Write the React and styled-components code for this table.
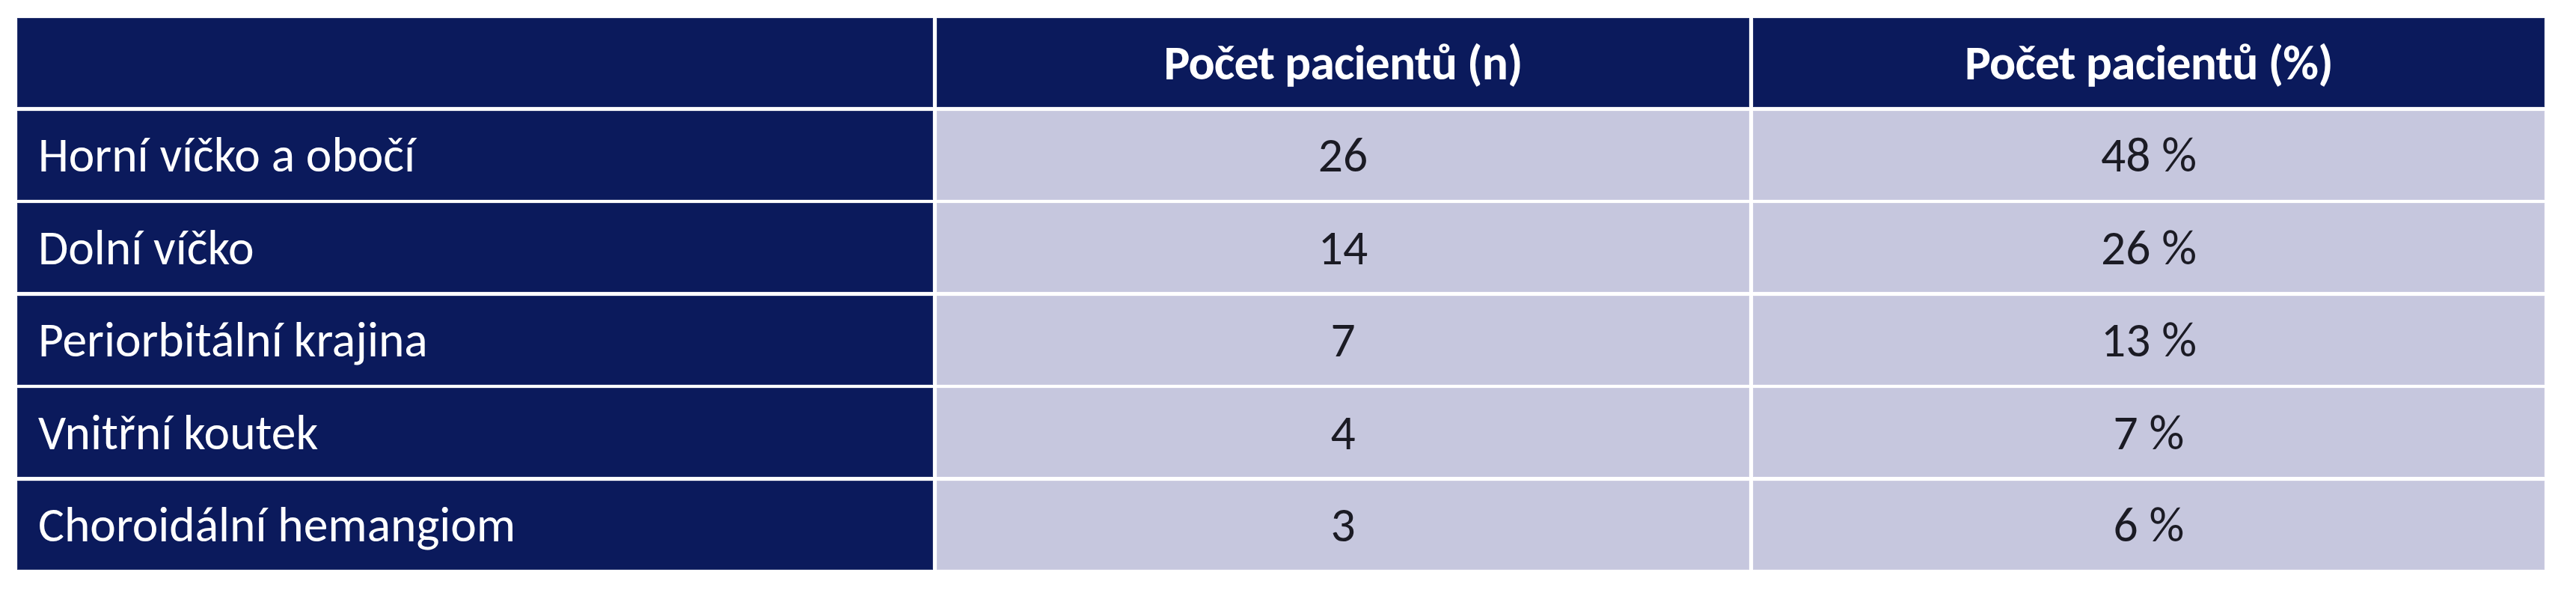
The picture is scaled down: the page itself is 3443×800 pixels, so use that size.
import React from 'react';
import styled, { createGlobalStyle } from 'styled-components';

const GlobalStyle = createGlobalStyle`
  html, body {
    margin: 0;
    padding: 0;
    background: #ffffff;
  }
  body {
    font-family: "Carlito", "Liberation Sans", Arial, sans-serif;
  }
`;

const Page = styled.div`
  padding: 24px 0 0 23px;
`;

const Grid = styled.div`
  display: grid;
  grid-template-columns: 1224px 1086px 1058px;
  grid-auto-rows: 119px;
  column-gap: 5px;
  row-gap: 4.6px;
  width: max-content;
`;

const Cell = styled.div`
  display: flex;
  align-items: center;
  justify-content: ${({ $align }) => ($align === 'left' ? 'flex-start' : 'center')};
  padding: 0 ${({ $align }) => ($align === 'left' ? '28px' : '0')};
  background: ${({ $dark }) => ($dark ? '#0b1a5c' : '#c6c7de')};
  color: ${({ $dark }) => ($dark ? '#ffffff' : '#1b1b24')};
  font-size: 65.5px;
  font-weight: ${({ $bold }) => ($bold ? 700 : 400)};
  letter-spacing: ${({ $bold }) => ($bold ? '-0.8px' : '0')};
  white-space: nowrap;
  box-shadow: inset 0 0 0 1px rgba(255, 255, 255, 0.12);
`;

const rows = [
  ['Horní víčko a obočí', '26', '48 %'],
  ['Dolní víčko', '14', '26 %'],
  ['Periorbitální krajina', '7', '13 %'],
  ['Vnitřní koutek', '4', '7 %'],
  ['Choroidální hemangiom', '3', '6 %'],
];

export default function App() {
  return (
    <>
      <GlobalStyle />
      <Page>
        <Grid>
          <Cell $dark $align="left" />
          <Cell $dark $bold>Počet pacientů (n)</Cell>
          <Cell $dark $bold>Počet pacientů (%)</Cell>
          {rows.map(([label, n, pct]) => (
            <React.Fragment key={label}>
              <Cell $dark $align="left">{label}</Cell>
              <Cell>{n}</Cell>
              <Cell>{pct}</Cell>
            </React.Fragment>
          ))}
        </Grid>
      </Page>
    </>
  );
}
